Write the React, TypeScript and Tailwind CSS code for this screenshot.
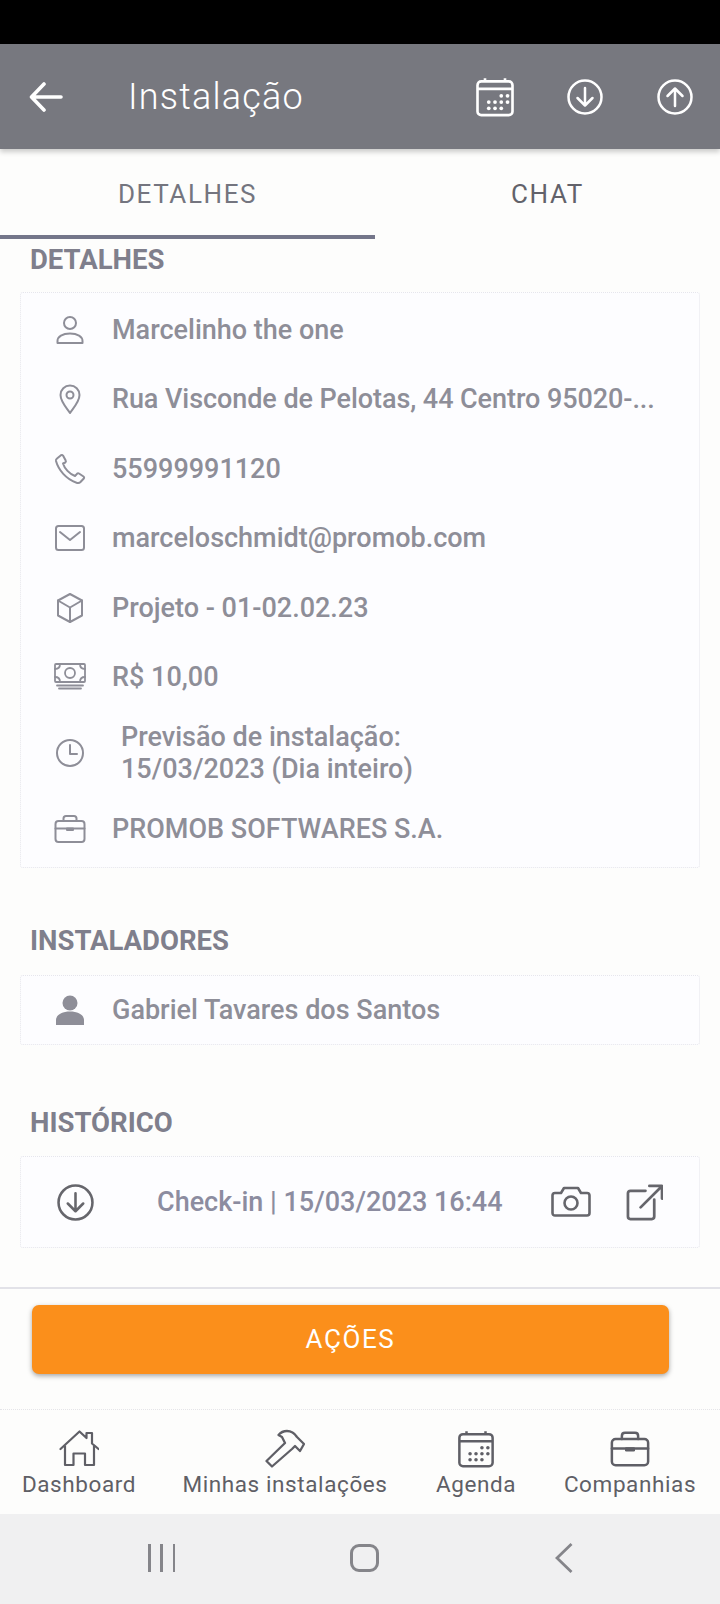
import { ReactNode } from 'react';

const gray = '#8e8e98';
const dark = '#5f5f66';

// thin line icons, drawn on a 32 box
function Svg({ className, children, sw = 2 }: { className: string; children: ReactNode; sw?: number }) {
	return (
		<svg viewBox="0 0 32 32" fill="none" stroke="currentColor" strokeWidth={sw} strokeLinecap="round" strokeLinejoin="round" className={className}>
			{children}
		</svg>
	);
}

const PersonIcon = () => (
	<Svg className="h-[32px] w-[32px]">
		<circle cx="16" cy="9" r="6" />
		<path d="M3.500 29v-2c0-4.500 5-7.500 12.500-7.500s12.500 3 12.500 7.500v2z" />
	</Svg>
);
const PinIcon = () => (
	<Svg className="h-[32px] w-[32px]">
		<path d="M16 30c-2-3.500-9.500-11-9.500-18a9.500 9.500 0 0 1 19 0c0 7-7.500 14.500-9.500 18z" />
		<circle cx="16" cy="12" r="3.500" />
	</Svg>
);
const PhoneIcon = () => (
	<Svg className="h-[32px] w-[32px]">
		<path d="M3 5.500 7 2.200c.8-.5 1.600-.4 2 .4l2.700 5c.4.700.2 1.400-.4 1.900L9 10.500c1.500 5 6.500 10.500 12 12.500l2-2.200c.6-.6 1.300-.7 2-.3l4.500 3c.7.5.8 1.300.3 2L26.500 29c-1 1-2.500 1.200-4 .7C12 26 4.500 17 2 8c-.2-1 .2-1.900 1-2.500z" />
	</Svg>
);
const MailIcon = () => (
	<Svg className="h-[32px] w-[32px]">
		<rect x="2" y="4" width="28" height="24" rx="2.500" />
		<path d="M6 10l10 8 10-8" />
	</Svg>
);
const BoxIcon = () => (
	<Svg className="h-[32px] w-[32px]">
		<path d="M16 2 28 8.500v15L16 30 4 23.500v-15z" />
		<path d="M4 8.500 16 15.500 28 8.500M16 15.500V30" />
	</Svg>
);
const MoneyIcon = () => (
	<Svg className="h-[32px] w-[32px]" sw={1.800}>
		<rect x="1" y="3" width="30" height="18" rx="1" />
		<circle cx="16" cy="12" r="5" />
		<path d="M1 8c3 0 5-2 5-5M31 8c-3 0-5-2-5-5M1 16c3 0 5 2 5 5M31 16c-3 0-5 2-5 5M3 24.500h26M5 27.500h22" />
	</Svg>
);
const ClockIcon = () => (
	<Svg className="h-[32px] w-[32px]">
		<circle cx="16" cy="16" r="13" />
		<path d="M16 8v9h7" />
	</Svg>
);

function BriefcaseIcon({ className }: { className: string }) {
	return (
		<Svg className={className}>
			<rect x="1.500" y="8" width="29" height="21" rx="3" />
			<path d="M9.500 8V5.500c0-1.400 1-2.500 2.500-2.500h8c1.500 0 2.500 1.100 2.500 2.500V8M1.500 15.500h29" />
			<path d="M13 15.500h6v1.500h-6z" fill="currentColor" />
		</Svg>
	);
}

function CalendarIcon({ className }: { className: string }) {
	const dots = [
		[21, 15],
		[26, 15],
		[11, 20],
		[16, 20],
		[21, 20],
		[26, 20],
		[11, 25],
		[16, 25],
		[21, 25],
	];
	return (
		<svg viewBox="0 0 32 32" fill="none" stroke="currentColor" strokeWidth="2.100" strokeLinejoin="round" className={className}>
			<rect x="2" y="3.500" width="28" height="27" rx="3" />
			<path d="M2 9.500h28M8 1v2.500M24 1v2.500" />
			{dots.map(([x, y]) => (
				<circle key={`${x}-${y}`} cx={x} cy={y} r="1.500" fill="currentColor" stroke="none" />
			))}
		</svg>
	);
}

function CircleArrow({ up, className }: { up?: boolean; className: string }) {
	return (
		<svg viewBox="0 0 36 36" fill="none" stroke="currentColor" strokeWidth="2.500" strokeLinecap="round" strokeLinejoin="round" className={className}>
			<circle cx="18" cy="18" r="16.500" />
			{up ? <path d="M18 27V10M10.500 17 18 9.500l7.500 7.500" /> : <path d="M18 9v17M10.500 19l7.500 7.500 7.500-7.500" />}
		</svg>
	);
}

function DetailRow({ icon, children }: { icon: ReactNode; children: ReactNode }) {
	return (
		<div className="flex h-[69.5px] items-center">
			<div className="flex w-[32px] justify-center">{icon}</div>
			<span className="ml-[26px] truncate">{children}</span>
		</div>
	);
}

function NavItem({ label, icon, width }: { label: string; icon: ReactNode; width: string }) {
	return (
		<div className={`flex flex-col items-center ${width}`}>
			<div className="flex h-[40px] items-center justify-center">{icon}</div>
			<span className="mt-[1px] whitespace-nowrap text-[22.500px] leading-[28px] tracking-[0.6px]">{label}</span>
		</div>
	);
}

export default function App() {
	return (
		<div className="flex h-[1604px] w-[720px] flex-col overflow-hidden bg-[#fdfdfc] font-['Roboto',sans-serif]">
			<div className="h-[44px] shrink-0 bg-black" />
			{/* header */}
			<header className="z-10 flex h-[105px] shrink-0 items-center bg-[#77787f] pl-[29px] text-white shadow-[0_3px_5px_rgba(0,0,0,0.2)]">
				<svg viewBox="0 0 34 30" fill="none" stroke="currentColor" strokeWidth="3.600" strokeLinecap="round" strokeLinejoin="round" className="h-[30px] w-[34px]">
					<path d="M32 15H3M15 2 2.500 15 15 28" />
				</svg>
				<h1 className="ml-[65px] text-[36px] font-light tracking-[1.200px]">Instalação</h1>
				<div className="ml-auto flex items-center pr-[27px]">
					<CalendarIcon className="h-[40px] w-[40px]" />
					<CircleArrow className="ml-[52px] h-[36px] w-[36px]" />
					<CircleArrow up className="ml-[54px] h-[36px] w-[36px]" />
				</div>
			</header>

			{/* tabs */}
			<div className="flex h-[90px] shrink-0 text-[26px] tracking-[1.600px]">
				<div className="flex w-[375px] items-center justify-center border-b-4 border-[#74768a] pt-[4px] text-[#74757f]">DETALHES</div>
				<div className="flex flex-1 items-center justify-center text-[#62626a]">CHAT</div>
			</div>

			<main className="flex-1 px-[20px] text-[27px] font-medium" style={{ color: gray }}>
				<h2 className="mt-[5px] ml-[10px] text-[27.500px] leading-[32px] font-bold text-[#7f7f8c]">DETALHES</h2>
				<section className="mt-[16px] h-[576px] rounded-[3px] border border-dotted border-[#e6e6ec] bg-[#fdfdff] pt-[2px] pl-[33px] pr-[44px]">
					<DetailRow icon={<PersonIcon />}>Marcelinho the one</DetailRow>
					<DetailRow icon={<PinIcon />}>
						<span className="tracking-[-0.07px]">Rua Visconde de Pelotas, 44 Centro 95020-...</span>
					</DetailRow>
					<DetailRow icon={<PhoneIcon />}>55999991120</DetailRow>
					<DetailRow icon={<MailIcon />}>marceloschmidt@promob.com</DetailRow>
					<DetailRow icon={<BoxIcon />}>Projeto - 01-02.02.23</DetailRow>
					<DetailRow icon={<MoneyIcon />}>R$ 10,00</DetailRow>
					<div className="flex h-[82px] items-center">
						<div className="flex w-[32px] justify-center"><ClockIcon /></div>
						<p className="ml-[35px] leading-[32px]">
							Previsão de instalação:
							<br />
							15/03/2023 (Dia inteiro)
						</p>
					</div>
					<DetailRow icon={<BriefcaseIcon className="h-[32px] w-[32px]" />}>PROMOB SOFTWARES S.A.</DetailRow>
				</section>

				<h2 className="mt-[57px] ml-[10px] text-[27.500px] leading-[32px] font-bold text-[#7f7f8c]">INSTALADORES</h2>
				<section className="mt-[18px] flex h-[70px] items-center rounded-[3px] border border-dotted border-[#e6e6ec] bg-[#fdfdff] pl-[33px]">
					<div className="flex w-[32px] justify-center">
						<svg viewBox="0 0 28 30" fill="currentColor" className="h-[30px] w-[28px]">
							<circle cx="14" cy="8" r="7.500" />
							<path d="M0 30v-5c0-5 6-8.500 14-8.500s14 3.500 14 8.500v5z" />
						</svg>
					</div>
					<span className="ml-[26px]">Gabriel Tavares dos Santos</span>
				</section>

				<h2 className="mt-[62px] ml-[10px] text-[27.500px] leading-[32px] font-bold text-[#7f7f8c]">HISTÓRICO</h2>
				<section className="mt-[17px] flex h-[92px] items-center rounded-[3px] border border-dotted border-[#e6e6ec] bg-[#fdfdff] pl-[36px] text-[#8c8ca0]">
					<CircleArrow className="h-[37px] w-[37px] text-[#66666c]" />
					<span className="ml-[63px]">Check-in | 15/03/2023 16:44</span>
					<svg viewBox="0 0 40 32" fill="none" stroke="currentColor" strokeWidth="2.600" strokeLinejoin="round" className="ml-[48px] h-[32px] w-[40px] text-[#66666c]">
						<path d="M4 7h6l3-5h14l3 5h6c1.500 0 2.500 1 2.500 2.500V27c0 1.500-1 2.500-2.500 2.500H4c-1.500 0-2.500-1-2.500-2.500V9.500C1.500 8 2.500 7 4 7z" />
						<circle cx="20" cy="17" r="6.500" />
					</svg>
					<svg viewBox="0 0 38 38" fill="none" stroke="currentColor" strokeWidth="2.800" strokeLinecap="round" strokeLinejoin="round" className="ml-[35px] h-[37px] w-[37px] text-[#66666c]">
						<path d="M20 7H4.500C3 7 2 8 2 9.500v24C2 35 3 36 4.500 36h22c1.500 0 2.500-1 2.500-2.500V16M15 24 36 3M24 2h13v13" />
					</svg>
				</section>
			</main>

			{/* actions */}
			<div className="h-[122px] shrink-0 border-t-2 border-[#e2e2e8] px-[32px] pt-[16px]">
				<button className="h-[69px] w-[637px] rounded-[7px] bg-[#fb8f1b] text-[26px] tracking-[1.600px] text-white shadow-[0_2px_5px_rgba(0,0,0,0.35)]">AÇÕES</button>
			</div>

			{/* bottom nav */}
			<nav className="flex h-[105px] shrink-0 items-start border-t border-dotted border-[#e4e4e8] pt-[19px]" style={{ color: dark }}>
				<NavItem
					label="Dashboard"
					width="w-[158px]"
					icon={
						<svg viewBox="0 0 40 40" fill="none" stroke="currentColor" strokeWidth="2.200" strokeLinejoin="round" className="h-[40px] w-[40px]">
							<path d="M1.500 20 20.500 2.500l7 6.500V4H33v10.500l6.500 5.500" strokeLinecap="round" />
							<path d="M6 16.500V36h8.500V24.500H26V36h9V16.500" />
						</svg>
					}
				/>
				<NavItem
					label="Minhas instalações"
					width="w-[254px]"
					icon={
						<svg viewBox="0 0 40 40" fill="none" stroke="currentColor" strokeWidth="2.300" strokeLinejoin="round" className="h-[40px] w-[40px]">
							<path d="M13.500 6C16 3 19 2 22 2c5 0 8 3 10 6l7 7-4 7-5-5-3 3-20 17.500L1.500 32 20 14l-3-6z" />
						</svg>
					}
				/>
				<NavItem label="Agenda" width="w-[128px]" icon={<CalendarIcon className="h-[38px] w-[38px]" />} />
				<NavItem label="Companhias" width="w-[180px]" icon={<BriefcaseIcon className="h-[40px] w-[40px]" />} />
			</nav>

			{/* system bar */}
			<div className="flex h-[90px] shrink-0 items-center bg-[#f0f0f1] pb-[3px] text-[#85858a]">
				<div className="ml-[148px] flex h-[28px] w-[27px] justify-between">
					<span className="w-[2.500px] bg-current" />
					<span className="w-[2.500px] bg-current" />
					<span className="w-[2.500px] bg-current" />
				</div>
				<div className="ml-[175px] h-[28px] w-[29px] rounded-[9px] border-[3px] border-current" />
				<svg viewBox="0 0 18 30" fill="none" stroke="currentColor" strokeWidth="2.800" className="ml-[176px] h-[30px] w-[18px]">
					<path d="M16.500 1 2 15l14.500 14" />
				</svg>
			</div>
		</div>
	);
}
